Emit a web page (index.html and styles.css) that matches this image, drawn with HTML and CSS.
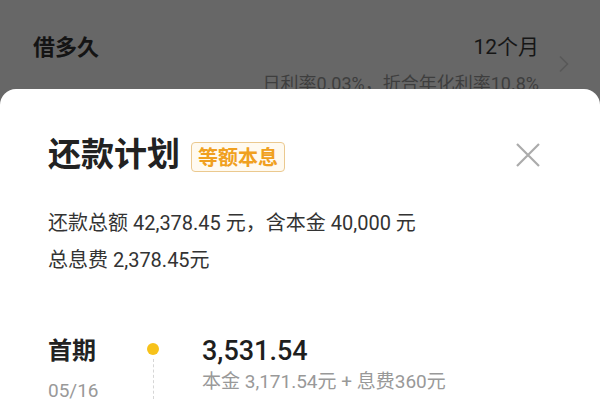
FILE: index.html
```html
<!DOCTYPE html>
<html lang="zh-CN">
<head>
<meta charset="utf-8">
<link rel="stylesheet" href="styles.css">
</head>
<body>
<div class="page">
  <div class="term-row">
    <div class="term-label">借多久</div>
    <div class="term-value">
      <div class="term-months">12个月</div>
      <div class="term-rate">日利率0.03%，折合年化利率10.8%</div>
    </div>
    <svg class="chevron" width="12" height="18" viewBox="0 0 12 18"><path d="M2 1.5 L9.5 9 L2 16.5" fill="none" stroke="#585858" stroke-width="1.6"/></svg>
  </div>

  <div class="sheet">
    <div class="sheet-head">
      <div class="sheet-title">还款计划</div>
      <span class="badge">等额本息</span>
      <svg class="close" width="26" height="26" viewBox="0 0 26 26"><path d="M2 2 L24 24 M24 2 L2 24" stroke="#ababab" stroke-width="2.2" fill="none"/></svg>
    </div>
    <div class="summary">
      <div>还款总额 42,378.45 元，含本金 40,000 元</div>
      <div>总息费 2,378.45元</div>
    </div>
    <div class="plan">
      <div class="plan-when">
        <div class="plan-name">首期</div>
        <div class="plan-date">05/16</div>
      </div>
      <div class="plan-track">
        <span class="dot"></span>
        <span class="track-line"></span>
      </div>
      <div class="plan-amount">
        <div class="amount">3,531.54</div>
        <div class="amount-detail">本金 3,171.54元 + 息费360元</div>
      </div>
    </div>
  </div>
</div>
</body>
</html>
```

FILE: styles.css
```css
* { box-sizing: border-box; }
html, body {
  margin: 0;
  padding: 0;
  width: 600px;
  height: 400px;
  overflow: hidden;
}
body {
  font-family: Roboto, "Noto Sans CJK SC", sans-serif;
  background: #676767;
}
.page {
  position: relative;
  width: 600px;
  height: 400px;
}
.term-row {
  display: flex;
  align-items: flex-start;
  padding: 32px 0 0 33px;
}
.term-label {
  font-size: 22px;
  line-height: 31px;
  font-weight: 700;
  color: #141414;
}
.term-value {
  margin-left: auto;
  text-align: right;
}
.term-months {
  font-size: 21px;
  line-height: 31px;
  color: #161616;
}
.term-rate {
  margin-top: 8px;
  font-size: 18px;
  line-height: 25px;
  color: #3e3e3e;
}
.chevron {
  margin: 23px 30px 0 19px;
}
.sheet {
  position: absolute;
  top: 89px;
  left: 0;
  right: 0;
  bottom: 0;
  background: #fff;
  border-radius: 16px 16px 0 0;
  padding: 44px 60px 0 48px;
}
.sheet-head {
  display: flex;
  align-items: center;
  height: 44px;
}
.sheet-title {
  font-size: 33px;
  line-height: 44px;
  font-weight: 700;
  color: #222;
}
.badge {
  margin-left: 11px;
  margin-top: 3px;
  height: 30px;
  padding: 0 6px;
  display: inline-flex;
  align-items: center;
  font-size: 20px;
  font-weight: 700;
  color: #f0a020;
  background: #fffaf0;
  border: 1.5px solid #ebc98f;
  border-radius: 4px;
}
.close {
  margin-left: auto;
  margin-right: -1px;
}
.summary {
  margin-top: 28px;
  font-size: 20px;
  line-height: 37px;
  color: #333;
}
.plan {
  margin-top: 56px;
  display: grid;
  grid-template-columns: 82px 46px 1fr;
}
.plan-name {
  font-size: 24px;
  line-height: 32px;
  font-weight: 700;
  color: #222;
}
.plan-date {
  margin-top: 15px;
  font-size: 19px;
  line-height: 18px;
  color: #999;
}
.plan-track {
  display: flex;
  flex-direction: column;
  align-items: center;
}
.dot {
  margin-top: 8px;
  width: 12px;
  height: 12px;
  border-radius: 50%;
  background: #f7c21a;
}
.track-line {
  margin-top: 4px;
  height: 40px;
  border-left: 1px dashed #d6d6d6;
}
.plan-amount {
  padding-left: 26px;
}
.amount {
  font-size: 27px;
  line-height: 32px;
  font-weight: 500;
  color: #1e1e1e;
}
.amount-detail {
  font-size: 19px;
  line-height: 30px;
  color: #999;
}
```
